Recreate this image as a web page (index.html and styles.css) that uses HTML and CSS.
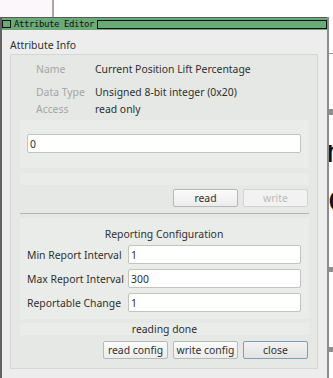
FILE: index.html
```html
<!DOCTYPE html>
<html lang="en">
<head>
  <meta charset="UTF-8">
  <title>Attribute Editor</title>
  <link rel="stylesheet" href="styles.css">
</head>
<body>
<div class="desktop">
  <div class="bg-tint"></div>
  <div class="bg-line"></div>
  <div class="bg-tick"></div>
  <div class="bg-band band-1"></div>
  <div class="bg-letter letter-n">n</div>
  <div class="bg-letter letter-c">C</div>
  <div class="bg-band band-2"></div>
  <div class="bg-band band-3"></div>

  <div class="window">
    <div class="titlebar">
      <span class="tb-box"></span>
      <span class="tb-title">Attribute Editor</span>
      <span class="tb-fill"></span>
    </div>

    <div class="win-body">
      <div class="section-label">Attribute Info</div>

      <div class="group">
        <div class="info">
          <div class="info-row row-name"><span class="key">Name</span><span class="val">Current Position Lift Percentage</span></div>
          <div class="info-row row-type"><span class="key">Data Type</span><span class="val">Unsigned 8-bit integer (0x20)</span></div>
          <div class="info-row row-access"><span class="key">Access</span><span class="val">read only</span></div>
        </div>

        <div class="panel value-panel">
          <input class="field" type="text" value="0">
        </div>
        <div class="panel strip"></div>

        <div class="btn-row">
          <button class="btn">read</button>
          <button class="btn" disabled>write</button>
        </div>

        <div class="sep"></div>

        <div class="panel report">
          <div class="report-title">Reporting Configuration</div>
          <div class="report-row"><label>Min Report Interval</label><input class="field" type="text" value="1"></div>
          <div class="report-row"><label>Max Report Interval</label><input class="field" type="text" value="300"></div>
          <div class="report-row"><label>Reportable Change</label><input class="field" type="text" value="1"></div>
        </div>

        <div class="panel status">reading done</div>

        <div class="btn-row bottom-row">
          <button class="btn">read config</button>
          <button class="btn">write config</button>
          <button class="btn focused">close</button>
        </div>
      </div>
    </div>
  </div>
</div>
</body>
</html>
```

FILE: styles.css
```css
body {
  margin: 0;
  background-color: #ffffff;
  font-family: "Noto Sans", "DejaVu Sans", sans-serif;
  font-size: 10.4px;
  color: #2f2f2f;
}

.desktop {
  position: relative;
  width: 333px;
  height: 378px;
  overflow: hidden;
  background-color: #ffffff;
}

/* things behind the dialog */
.bg-tint {
  position: absolute;
  left: 0;
  top: 0;
  width: 52px;
  height: 17px;
  background-color: #fbf7fb;
}

.bg-line {
  position: absolute;
  left: 52px;
  top: 0;
  width: 2px;
  height: 17px;
  background-color: #a9a9a9;
}

.bg-tick {
  position: absolute;
  left: 329px;
  top: 53px;
  width: 4px;
  height: 1px;
  background-color: #9a9a9a;
}

.bg-band {
  position: absolute;
  left: 329px;
  width: 4px;
  background-color: #8e8e8e;
}

.band-1 { top: 109px; height: 6px; }
.band-2 { top: 267px; height: 5px; }
.band-3 { top: 347px; height: 5px; }

.bg-letter {
  position: absolute;
  font-family: "DejaVu Sans", sans-serif;
  font-size: 31px;
  line-height: 31px;
  color: #111;
}

.letter-n { left: 326px; top: 136px; }
.letter-c { left: 328px; top: 186px; }

/* dialog */
.window {
  position: absolute;
  left: 0;
  top: 17px;
  width: 329px;
  height: 370px;
  box-sizing: border-box;
  background-color: #ededed;
  border-left: 2px solid #626262;
  border-right: 2px solid #8c8c8c;
}

.titlebar {
  display: flex;
  align-items: center;
  height: 13px;
  box-sizing: border-box;
  background-color: #6aa978;
  border-top: 1px solid #5a5a5a;
}

.tb-box {
  width: 9px;
  height: 8px;
  box-sizing: border-box;
  border: 1px solid #111;
}

.tb-title {
  margin-left: 3px;
  font-family: "DejaVu Sans Mono", monospace;
  font-size: 9px;
  letter-spacing: -0.42px;
  line-height: 10px;
  color: #111;
}

.tb-fill {
  flex: 1;
  height: 9px;
  margin-left: 3px;
  box-sizing: border-box;
  border: 1px solid #111;
}

.win-body {
  padding: 9px 9px 0 8px;
}

.section-label {
  line-height: 13px;
  margin-bottom: 2px;
}

.group {
  background-color: #e5e8e5;
  border: 1px solid #d4d7d4;
  padding: 0 8px 9px 9px;
}

.info {
  padding: 7px 0 4px 16px;
}

.info-row {
  display: flex;
  line-height: 14px;
}

.row-type { margin-top: 9px; }
.row-access { margin-top: 3px; }

.key {
  width: 59px;
  color: #a4a6a4;
}

.panel {
  background-color: #eaecea;
}

.value-panel {
  display: flex;
  height: 48px;
  box-sizing: border-box;
  padding: 14px 8px 0 7px;
}

.strip {
  height: 12px;
  margin-top: 5px;
}

.field {
  flex: 1;
  min-width: 0;
  height: 19px;
  box-sizing: border-box;
  margin: 0;
  padding: 0 2px;
  background-color: #ffffff;
  border: 1px solid #c2c4c2;
  border-radius: 2px;
  font-family: inherit;
  font-size: 10.4px;
  color: #2f2f2f;
  outline: none;
}

.btn-row {
  display: flex;
  justify-content: flex-end;
  gap: 5px;
  margin-top: 4px;
  padding-right: 1px;
}

.btn {
  width: 65px;
  height: 18px;
  padding: 0;
  background: linear-gradient(#fbfbfb, #ececec);
  border: 1px solid #b7b9b7;
  border-radius: 2px;
  font-family: inherit;
  font-size: 10.4px;
  color: #2f2f2f;
}

.btn:disabled {
  color: #b9bbb9;
  border-color: #d2d4d2;
  background: #f1f2f1;
}

.btn.focused {
  border-color: #7f9fb6;
  background: linear-gradient(#f2f2f2, #e3e3e3);
}

.sep {
  height: 1px;
  margin-top: 6px;
  background-color: #b3b6b3;
}

.report {
  margin-top: 4px;
  padding: 9px 8px 7px 7px;
}

.report-title {
  line-height: 14px;
  text-align: center;
  margin-bottom: 4px;
}

.report-row {
  display: flex;
  align-items: center;
  height: 19px;
}

.report-row + .report-row {
  margin-top: 5px;
}

.report-row label {
  width: 101px;
}

.status {
  margin-top: 4px;
  height: 12px;
  line-height: 12px;
  text-align: center;
}

.bottom-row {
  margin-top: 6px;
}
```
